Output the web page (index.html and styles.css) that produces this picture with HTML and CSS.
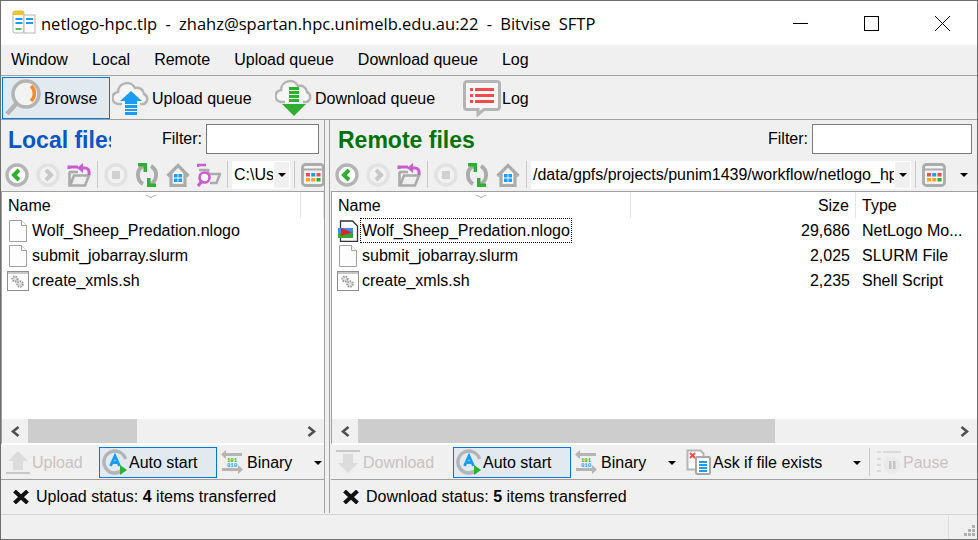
FILE: index.html
```html
<!DOCTYPE html>
<html lang="en">
<head>
    <meta charset="utf-8">
    <title>netlogo-hpc.tlp - Bitvise SFTP</title>
    <link rel="stylesheet" href="styles.css">
</head>
<body>
<svg class="defs" width="0" height="0">
    <defs>
        <symbol id="back" viewBox="0 0 24 24"><circle cx="12" cy="12" r="10" fill="#fff" stroke="#b4b4b4" stroke-width="3.400"/><path d="M14 7l-5 5 5 5" fill="none" stroke="#2fae32" stroke-width="4"/></symbol>
        <symbol id="fwd" viewBox="0 0 24 24"><circle cx="12" cy="12" r="10" fill="#f2f2f2" stroke="#e2e2e2" stroke-width="3.400"/><path d="M10 7l5 5-5 5" fill="none" stroke="#c8c8c8" stroke-width="4"/></symbol>
        <symbol id="up" viewBox="0 0 24 24"><path d="M2 6V4h9" fill="none" stroke="#c95ccf" stroke-width="3"/><path d="M2.500 9v13.500h15.500l4-10H7l-3.500 9" fill="none" stroke="#ababab" stroke-width="2.600"/><path d="M2 9h9" stroke="#ababab" stroke-width="2.600"/><path d="M14 5h4a4 4 0 0 1 4 4v3" fill="none" stroke="#c95ccf" stroke-width="3"/><path d="M16 0v10l-6-5z" fill="#c95ccf"/></symbol>
        <symbol id="stop" viewBox="0 0 24 24"><circle cx="12" cy="12" r="10" fill="#f2f2f2" stroke="#e2e2e2" stroke-width="3.400"/><rect x="8" y="8" width="8" height="8" fill="#d0d0d0"/></symbol>
        <symbol id="refresh" viewBox="0 0 24 24"><path d="M8 3A10.500 10.500 0 0 0 8 21M16 3A10.500 10.500 0 0 1 16 21" fill="none" stroke="#ababab" stroke-width="3.800"/><path d="M3 0h9v9H8.500V3.500H3z" fill="#2fae32"/><path d="M21 24h-9v-9h3.500v5.500H21z" fill="#2fae32"/></symbol>
        <symbol id="home" viewBox="0 0 24 24"><path d="M1.500 13L12 2.500 22.500 13M5 10.500V22.500h14V10.500" fill="none" stroke="#ababab" stroke-width="3.200"/><rect x="7" y="10" width="10" height="10" fill="#fff"/><path d="M8 11h3.600v3.600H8zM12.400 11H16v3.600h-3.600zM8 15.400h3.600V19H8zM12.400 15.400H16V19h-3.600z" fill="#1b9cf2"/></symbol>
        <symbol id="find" viewBox="0 0 24 24"><path d="M1 4V2h8" fill="none" stroke="#c95ccf" stroke-width="2.600"/><path d="M2 7h9v4h12l-3.500 9H13M11 11H9" fill="none" stroke="#ababab" stroke-width="2.600"/><circle cx="7.500" cy="14.500" r="5" fill="#fff" stroke="#c95ccf" stroke-width="2.600"/><path d="M4.500 18.500L1 23" stroke="#c95ccf" stroke-width="3.200"/></symbol>
        <symbol id="view" viewBox="0 0 24 24"><rect x="1.500" y="1.500" width="21" height="21" rx="3" fill="#f6f6f6" stroke="#ababab" stroke-width="2.800"/><path d="M2 6.500h20" stroke="#ababab" stroke-width="2"/><path d="M5 10h4v3.500H5zM15.500 10h4v3.500h-4z" fill="#ef4d4d"/><path d="M10.200 10h4v3.500h-4z" fill="#1b9cf2"/><path d="M5 15h4v3.500H5zM10.200 15h4v3.500h-4z" fill="#f6a623"/><path d="M15.500 15h4v3.500h-4z" fill="#2fae32"/></symbol>
        <symbol id="page" viewBox="0 0 18 22"><path d="M.5.500h12l5 5v16H.5z" fill="#fdfdfd" stroke="#a0a0a0"/><path d="M12.500.500v5h5" fill="#fff" stroke="#a0a0a0"/></symbol>
        <symbol id="script" viewBox="0 0 22 20"><rect x=".5" y=".5" width="21" height="19" fill="#fff" stroke="#8e8e8e"/><path d="M1 1h20v2H1z" fill="#c8c8c8"/><circle cx="8" cy="8" r="2.600" fill="#e4e4e4" stroke="#9a9a9a" stroke-width="2" stroke-dasharray="1.500 1"/><circle cx="13" cy="13" r="2.800" fill="#e4e4e4" stroke="#9a9a9a" stroke-width="2" stroke-dasharray="1.500 1"/></symbol>
        <symbol id="nlogo" viewBox="0 0 22 22"><path d="M3.500 1h12l5 5v15.500h-17z" fill="#fff" stroke="#333" stroke-width="1.300"/><path d="M1 8h15v5H1z" fill="#3f8df0"/><path d="M1 13h15v5H1z" fill="#3aa53a"/><path d="M4 8l11 4.500L4 16z" fill="#d8262c"/></symbol>
        <symbol id="auto" viewBox="0 0 26 26"><path d="M21 20.500A11 11 0 1 1 23.500 10" fill="none" stroke="#b4b4b4" stroke-width="3.400"/><path d="M8.500 17l4.500-10 4.500 10M10.500 13.500h5" fill="none" stroke="#1b9cf2" stroke-width="2.800"/><path d="M18 16l7 5-7 5z" fill="#2fae32"/></symbol>
        <symbol id="binary" viewBox="0 0 24 24"><path d="M4 3h18v3H4zM2 18h18v3H2z" fill="#b4b4b4"/><path d="M6 0v9L1 4.500zM18 15v9l5-4.500z" fill="#b4b4b4"/><text x="12" y="12" font-family="Liberation Mono" font-size="5.500" font-weight="700" text-anchor="middle" fill="#2fae32">101</text><text x="12" y="17" font-family="Liberation Mono" font-size="5.500" font-weight="700" text-anchor="middle" fill="#1b9cf2">010</text></symbol>
        <symbol id="xmark" viewBox="0 0 16 14"><path d="M1.500 1l13 12M14.500 1l-13 12" stroke="#111" stroke-width="4"/></symbol>
        <symbol id="chev-l" viewBox="0 0 9 11"><path d="M7.500 1L2 5.500 7.500 10" fill="none" stroke="#505050" stroke-width="2.600"/></symbol>
        <symbol id="chev-r" viewBox="0 0 9 11"><path d="M1.500 1L7 5.500 1.500 10" fill="none" stroke="#505050" stroke-width="2.600"/></symbol>
    </defs>
</svg>

<div class="window">
    <header class="titlebar">
        <svg class="app-icon" width="26" height="26" viewBox="0 0 26 26">
            <rect x="1" y="1" width="11" height="22" rx="2" fill="#fff" stroke="#b4b4b4"/>
            <rect x="12" y="5" width="11" height="18" fill="#fff" stroke="#b4b4b4"/>
            <rect x="1" y="1" width="11" height="4" fill="#f6c21c"/>
            <path d="M3.500 8h7v2h-7zM3.500 12h7v2h-7zM14 8h7v2h-7zM14 12h7v2h-7z" fill="#1b9cf2"/>
            <path d="M3.500 18h6v2h-6z" fill="#5cbf5c"/>
        </svg>
        <span class="title">netlogo-hpc.tlp - zhahz@spartan.hpc.unimelb.edu.au:22 - Bitvise SFTP</span>
        <div class="caption-btns">
            <svg width="15" height="15" viewBox="0 0 15 15"><path d="M0 7.500h15" stroke="#000"/></svg>
            <svg width="15" height="15" viewBox="0 0 15 15"><rect x=".5" y=".5" width="14" height="14" fill="none" stroke="#000"/></svg>
            <svg width="15" height="15" viewBox="0 0 15 15"><path d="M0 0l15 15M15 0L0 15" stroke="#000" fill="none"/></svg>
        </div>
    </header>

    <nav class="menubar">
        <span>Window</span><span>Local</span><span>Remote</span><span>Upload queue</span><span>Download queue</span><span>Log</span>
    </nav>

    <div class="main-toolbar">
        <div class="tool tool-browse active">
            <svg width="38" height="38" viewBox="0 0 38 38"><circle cx="22" cy="15" r="13" fill="#f3f3f3" stroke="#b4b4b4" stroke-width="3.500"/><path d="M12 25L3 35" stroke="#b4b4b4" stroke-width="4.500"/><path d="M27 7a10 10 0 0 1 0 15" fill="none" stroke="#f58a2c" stroke-width="3.500"/></svg>
            <span>Browse</span>
        </div>
        <div class="tool tool-upload">
            <svg width="38" height="38" viewBox="0 0 38 38"><path d="M10 25H7a6 6 0 0 1-1-12 9 9 0 0 1 17-4 7 7 0 0 1 9 6 5.500 5.500 0 0 1 0 10h-4" fill="#f6f6f6" stroke="#b4b4b4" stroke-width="2.500"/><path d="M19 12L30 22H8z" fill="#1b9cf2"/><path d="M13 22h12v3H13zM13 26h12v3H13zM13 30h12v2H13zM13 33h12v3H13z" fill="#1b9cf2"/></svg>
            <span>Upload queue</span>
        </div>
        <div class="tool tool-download">
            <svg width="38" height="38" viewBox="0 0 38 38"><path d="M10 23H7a6 6 0 0 1-1-12 9 9 0 0 1 17-4 7 7 0 0 1 9 6 5.500 5.500 0 0 1 0 10h-4" fill="#f6f6f6" stroke="#b4b4b4" stroke-width="2.500"/><path d="M14 8h10v3H14zM14 12h10v3H14zM14 16h10v3H14zM14 20h10v3H14z" fill="#2fae32"/><path d="M7 25h24L19 37z" fill="#2fae32"/></svg>
            <span>Download queue</span>
        </div>
        <div class="tool tool-log">
            <svg width="38" height="38" viewBox="0 0 38 38"><path d="M4 2.500h30a2.500 2.500 0 0 1 2.500 2.500v23a2.500 2.500 0 0 1-2.500 2.500H21l-6 5v-5H4A2.500 2.500 0 0 1 1.500 28V5A2.500 2.500 0 0 1 4 2.500z" fill="#f6f6f6" stroke="#b4b4b4" stroke-width="3"/><path d="M7 9h3v3H7zM7 15h3v3H7zM7 21h3v3H7z" fill="#ef4d4d"/><path d="M12 9h19v3H12zM12 15h19v3H12zM12 21h19v3H12z" fill="#ef4d4d"/></svg>
            <span>Log</span>
        </div>
    </div>

    <div class="panes">
        <section class="pane pane-local">
            <div class="pane-head">
                <h2 class="heading heading-local">Local files</h2>
                <label class="filter">Filter:<span class="filter-box"></span></label>
            </div>
            <div class="pane-tools">
                <svg class="ic" width="24" height="24"><use href="#back"/></svg>
                <svg class="ic" width="24" height="24"><use href="#fwd"/></svg>
                <svg class="ic" width="24" height="24"><use href="#up"/></svg>
                <i class="sep"></i>
                <svg class="ic" width="24" height="24"><use href="#stop"/></svg>
                <svg class="ic" width="24" height="24"><use href="#refresh"/></svg>
                <svg class="ic" width="24" height="24"><use href="#home"/></svg>
                <svg class="ic" width="24" height="24"><use href="#find"/></svg>
                <i class="sep"></i>
                <div class="path path-local"><span class="path-text">C:\Users</span><span class="path-arrow"><b class="caret"></b></span></div>
                <i class="sep"></i>
                <svg class="ic" width="24" height="24"><use href="#view"/></svg>
            </div>
            <div class="list-head">
                <span class="col-name">Name<i class="sort"></i></span>
                <span class="col-rest"></span>
            </div>
            <ul class="files">
                <li><svg class="page-ic" width="18" height="22"><use href="#page"/></svg><span class="fname">Wolf_Sheep_Predation.nlogo</span></li>
                <li><svg class="page-ic" width="18" height="22"><use href="#page"/></svg><span class="fname">submit_jobarray.slurm</span></li>
                <li><svg width="22" height="20"><use href="#script"/></svg><span class="fname">create_xmls.sh</span></li>
            </ul>
            <div class="hscroll">
                <span class="arrow"><svg width="9" height="11"><use href="#chev-l"/></svg></span>
                <div class="track"><div class="thumb thumb-local"></div></div>
                <span class="arrow"><svg width="9" height="11"><use href="#chev-r"/></svg></span>
            </div>
            <div class="transfer">
                <div class="xfer disabled"><svg width="26" height="26" viewBox="0 0 26 26"><path d="M13 2l10 10h-5v9H8v-9H3z" fill="#dcdcdc"/><path d="M1 23h24v2H1z" fill="#c8c8c8"/></svg><span>Upload</span></div>
                <div class="xfer xfer-auto"><svg width="26" height="26"><use href="#auto"/></svg><span>Auto start</span></div>
                <div class="xfer xfer-binary"><svg width="24" height="24"><use href="#binary"/></svg><span>Binary</span><b class="caret caret-far"></b></div>
            </div>
            <div class="status"><svg width="16" height="14"><use href="#xmark"/></svg><span>Upload status: <b>4</b> items transferred</span></div>
        </section>

        <div class="splitter"></div>

        <section class="pane pane-remote">
            <div class="pane-head">
                <h2 class="heading heading-remote">Remote files</h2>
                <label class="filter">Filter:<span class="filter-box filter-wide"></span></label>
            </div>
            <div class="pane-tools">
                <svg class="ic" width="24" height="24"><use href="#back"/></svg>
                <svg class="ic" width="24" height="24"><use href="#fwd"/></svg>
                <svg class="ic" width="24" height="24"><use href="#up"/></svg>
                <i class="sep"></i>
                <svg class="ic" width="24" height="24"><use href="#stop"/></svg>
                <svg class="ic" width="24" height="24"><use href="#refresh"/></svg>
                <svg class="ic" width="24" height="24"><use href="#home"/></svg>
                <i class="sep"></i>
                <div class="path path-remote"><span class="path-text">/data/gpfs/projects/punim1439/workflow/netlogo_hpc</span><span class="path-arrow"><b class="caret"></b></span></div>
                <i class="sep"></i>
                <svg class="ic" width="24" height="24"><use href="#view"/></svg>
                <b class="caret caret-view"></b>
            </div>
            <div class="list-head">
                <span class="col-name">Name<i class="sort"></i></span>
                <span class="col-size">Size</span>
                <span class="col-type">Type</span>
            </div>
            <ul class="files">
                <li><svg width="22" height="22"><use href="#nlogo"/></svg><span class="fname focused">Wolf_Sheep_Predation.nlogo</span><span class="size">29,686</span><span class="type">NetLogo Mo...</span></li>
                <li><svg class="page-ic" width="18" height="22"><use href="#page"/></svg><span class="fname">submit_jobarray.slurm</span><span class="size">2,025</span><span class="type">SLURM File</span></li>
                <li><svg width="22" height="20"><use href="#script"/></svg><span class="fname">create_xmls.sh</span><span class="size">2,235</span><span class="type">Shell Script</span></li>
            </ul>
            <div class="hscroll">
                <span class="arrow"><svg width="9" height="11"><use href="#chev-l"/></svg></span>
                <div class="track"><div class="thumb thumb-remote"></div></div>
                <span class="arrow"><svg width="9" height="11"><use href="#chev-r"/></svg></span>
            </div>
            <div class="transfer">
                <div class="xfer disabled xfer-dl"><svg width="26" height="26" viewBox="0 0 26 26"><path d="M1 1h24v2H1z" fill="#c8c8c8"/><path d="M8 5h10v9h5L13 24 3 14h5z" fill="#dcdcdc"/></svg><span>Download</span></div>
                <div class="xfer xfer-auto"><svg width="26" height="26"><use href="#auto"/></svg><span>Auto start</span></div>
                <div class="xfer xfer-binary xfer-binary-r"><svg width="24" height="24"><use href="#binary"/></svg><span>Binary</span><b class="caret caret-far"></b></div>
                <div class="xfer xfer-ask">
                    <svg width="26" height="26" viewBox="0 0 26 26"><path d="M1.500 1.500h13l3 3v5h-7v11h-9z" fill="#fff" stroke="#b4b4b4" stroke-width="2"/><path d="M4 4l5 5M9 4L4 9" stroke="#ef4d4d" stroke-width="2"/><rect x="10" y="8" width="14" height="17" rx="1" fill="#fff" stroke="#a8a8a8" stroke-width="2"/><path d="M13 12h8v2h-8zM13 15h8v2h-8zM13 18h8v2h-8zM13 21h8v2h-8z" fill="#1b9cf2"/></svg>
                    <span>Ask if file exists</span><b class="caret caret-ask"></b>
                </div>
                <i class="sep sep-tall"></i>
                <div class="xfer disabled xfer-pause"><svg width="26" height="26" viewBox="0 0 26 26"><path d="M1 2h4v2H1zM7 2h18v2H7zM1 9h4v2H1zM1 15h4v2H1zM1 21h4v2H1z" fill="#dadada"/><circle cx="16" cy="16" r="8.500" fill="#eaeaea"/><path d="M13 12h2.500v8H13zM17 12h2.500v8H17z" fill="#c4c4c4"/></svg><span>Pause</span></div>
            </div>
            <div class="status"><svg width="16" height="14"><use href="#xmark"/></svg><span>Download status: <b>5</b> items transferred</span></div>
        </section>
    </div>

    <footer class="statusbar">
        <div class="grip">
            <svg width="12" height="12" viewBox="0 0 12 12"><path d="M9 0h3v3H9zM5 4h3v3H5zM9 4h3v3H9zM1 8h3v3H1zM5 8h3v3H5zM9 8h3v3H9z" fill="#b0b0b0"/></svg>
        </div>
    </footer>
</div>
</body>
</html>
```
FILE: styles.css
```css
* {
    box-sizing: border-box;
}
html, body {
    margin: 0;
    padding: 0;
}
body {
    width: 978px;
    height: 540px;
    overflow: hidden;
    font-family: "Liberation Sans", Arial, sans-serif;
    font-size: 16px;
    color: #000;
    background: #f0f0f0;
}
.defs {
    position: absolute;
}
svg {
    display: block;
    flex: none;
}
.window {
    width: 978px;
    height: 540px;
    display: flex;
    flex-direction: column;
    border: 1px solid #6e6e6e;
    overflow: hidden;
}

/* title bar */
.titlebar {
    height: 44px;
    background: #fff;
    display: flex;
    align-items: center;
    padding-left: 11px;
    flex: none;
}
.app-icon {
    width: 26px;
    height: 26px;
    margin-right: 3px;
}
.title {
    font-family: "Open Sans", sans-serif;
    font-size: 16.5px;
    word-spacing: 4px;
    white-space: nowrap;
}
.caption-btns {
    margin-left: auto;
    display: flex;
    gap: 56px;
    padding-right: 27px;
}

/* menu */
.menubar {
    height: 31px;
    flex: none;
    display: flex;
    align-items: center;
    gap: 24px;
    padding-left: 10px;
    background: #f0f0f0;
    border-bottom: 1px solid #a0a0a0;
}

/* main toolbar */
.main-toolbar {
    height: 44px;
    flex: none;
    display: flex;
    align-items: center;
    padding-left: 1px;
    border-bottom: 1px solid #a0a0a0;
}
.tool {
    height: 42px;
    display: flex;
    align-items: center;
    gap: 2px;
}
.tool span {
    padding-top: 2px;
}
.tool-browse {
    width: 108px;
    padding-left: 1px;
    margin-right: 2px;
}
.tool-upload {
    width: 163px;
}
.tool-download {
    width: 188px;
}
.tool-log {
    gap: 1px;
}
.active {
    background: #e1e9f1;
    border: 1px solid #0078d7;
}

/* panes */
.panes {
    flex: 1;
    display: flex;
    min-height: 0;
}
.pane {
    display: flex;
    flex-direction: column;
    min-width: 0;
}
.pane-local {
    width: 323px;
}
.pane-remote {
    flex: 1;
}
.splitter {
    width: 6px;
    margin-right: 1px;
    margin-bottom: 1px;
    border-left: 1px solid #a0a0a0;
    border-right: 1px solid #a0a0a0;
    flex: none;
}
.pane-head {
    height: 38px;
    flex: none;
    display: flex;
    align-items: center;
    padding-left: 7px;
    padding-right: 5px;
}
.heading {
    margin: 0;
    padding-top: 2px;
    font-size: 23px;
    font-weight: 700;
    white-space: nowrap;
    overflow: hidden;
}
.heading-local {
    width: 103px;
    color: #0b55c4;
}
.heading-remote {
    color: #027202;
}
.filter {
    margin-left: auto;
    display: flex;
    align-items: center;
    gap: 4px;
}
.filter-box {
    width: 113px;
    height: 30px;
    background: #fff;
    border: 1px solid #7a7a7a;
}
.filter-wide {
    width: 160px;
}
.pane-tools {
    height: 34px;
    flex: none;
    display: flex;
    align-items: center;
    gap: 7px;
    padding-left: 4px;
    border-bottom: 1px solid #a0a0a0;
    overflow: hidden;
}
.ic {
    width: 24px;
    height: 24px;
}
.sep {
    width: 1px;
    height: 27px;
    margin: 0 -1px;
    background: #c8c8c8;
    flex: none;
}
.path {
    height: 28px;
    background: #fff;
    display: flex;
    align-items: center;
    flex: none;
    margin-left: -2px;
    margin-right: -2px;
}
.path-local {
    width: 58px;
}
.path-remote {
    width: 380px;
}
.path-text {
    flex: 1;
    overflow: hidden;
    white-space: nowrap;
    padding-left: 2px;
}
.path-arrow {
    width: 17px;
    height: 28px;
    background: #f0f0f0;
    display: flex;
    align-items: center;
    justify-content: center;
    border: 1px solid #fff;
    flex: none;
}
.caret {
    display: block;
    width: 0;
    height: 0;
    border-left: 4px solid transparent;
    border-right: 4px solid transparent;
    border-top: 4px solid #000;
    flex: none;
}
.caret-view {
    margin-left: 7px;
}

/* file lists */
.list-head {
    height: 26px;
    flex: none;
    display: flex;
    background: #fff;
    align-items: stretch;
    border-left: 1px solid #a0a0a0;
}
.list-head span {
    display: flex;
    align-items: center;
    padding-top: 2px;
    border-right: 1px solid #e5e5e5;
}
.col-name {
    position: relative;
    width: 299px;
    padding-left: 6px;
}
.col-rest {
    flex: 1;
}
.col-size {
    width: 225px;
    justify-content: flex-end;
    padding-right: 6px;
}
.col-type {
    flex: 1;
    padding-left: 6px;
    border-right: 0 !important;
}
.sort {
    position: absolute;
    top: -1px;
    left: 145px;
    width: 8px;
    height: 8px;
    border-right: 1px solid #777;
    border-bottom: 1px solid #777;
    transform: scaleY(.5) rotate(45deg);
}
.files {
    flex: 1;
    margin: 0;
    padding: 0;
    list-style: none;
    background: #fff;
    min-height: 0;
    border-left: 1px solid #a0a0a0;
}
.files li {
    height: 25px;
    display: flex;
    align-items: center;
    padding-left: 5px;
    position: relative;
}
.page-ic {
    margin-left: 2px;
}
.fname {
    position: absolute;
    left: 28px;
    white-space: nowrap;
    line-height: 25px;
    padding: 0 2px;
}
.focused {
    outline: 1px dotted #000;
    outline-offset: -1px;
}
.size {
    position: absolute;
    right: 127px;
}
.type {
    position: absolute;
    left: 530px;
    white-space: nowrap;
}
.hscroll {
    height: 26px;
    flex: none;
    display: flex;
    align-items: stretch;
    background: #f0f0f0;
    border-left: 1px solid #a0a0a0;
    border-bottom: 2px solid #fff;
}
.arrow {
    width: 26px;
    flex: none;
    display: flex;
    align-items: center;
    justify-content: center;
}
.track {
    flex: 1;
}
.thumb {
    height: 100%;
    background: #cdcdcd;
}
.thumb-local {
    width: 109px;
}
.thumb-remote {
    width: 417px;
}

/* transfer toolbar */
.transfer {
    height: 35px;
    flex: none;
    display: flex;
    align-items: center;
    padding-left: 4px;
    border-bottom: 1px solid #a0a0a0;
}
.xfer {
    display: flex;
    align-items: center;
    gap: 3px;
    height: 31px;
    white-space: nowrap;
}
.xfer span {
    padding-top: 2px;
}
.disabled {
    color: #c8c2c2;
    width: 94px;
    gap: 1px;
}
.xfer-dl {
    width: 118px;
    gap: 2px;
}
.xfer-auto {
    width: 118px;
    background: #e1e9f1;
    border: 1px solid #0078d7;
    padding-left: 2px;
    gap: 1px;
}
.xfer-binary {
    width: 106px;
    padding-left: 3px;
    position: relative;
}
.xfer-binary-r {
    width: 115px;
}
.caret-far {
    position: absolute;
    right: 1px;
    top: 14px;
}
.xfer-binary-r .caret-far {
    right: 10px;
}
.xfer-ask {
    width: 183px;
    gap: 1px;
    position: relative;
}
.caret-ask {
    position: absolute;
    right: 8px;
    top: 14px;
}
.sep-tall {
    height: 28px;
    margin: 0;
}
.xfer-pause {
    width: auto;
    margin-left: 6px;
    gap: 1px;
}
.status {
    height: 34px;
    flex: none;
    display: flex;
    align-items: center;
    gap: 7px;
    padding-left: 12px;
}

/* bottom bar */
.statusbar {
    height: 25px;
    flex: none;
    border-top: 1px solid #d4d4d4;
    display: flex;
    justify-content: flex-end;
}
.grip {
    width: 29px;
    border-left: 1px solid #dcdcdc;
    display: flex;
    align-items: flex-end;
    justify-content: flex-end;
    padding: 0 2px 2px 0;
}
```
